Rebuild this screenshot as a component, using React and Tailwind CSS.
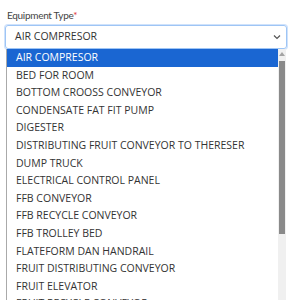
const items = [
  "AIR COMPRESOR",
  "BED FOR ROOM",
  "BOTTOM CROOSS CONVEYOR",
  "CONDENSATE FAT FIT PUMP",
  "DIGESTER",
  "DISTRIBUTING FRUIT CONVEYOR TO THERESER",
  "DUMP TRUCK",
  "ELECTRICAL CONTROL PANEL",
  "FFB CONVEYOR",
  "FFB RECYCLE CONVEYOR",
  "FFB TROLLEY BED",
  "FLATEFORM DAN HANDRAIL",
  "FRUIT DISTRIBUTING CONVEYOR",
  "FRUIT ELEVATOR",
  "FRUIT RECYCLE CONVEYOR",
];

export default function App() {
  return (
    <div
      className="w-[289px] h-[300px] overflow-hidden bg-white text-[#333]"
      style={{ fontFamily: "'Open Sans', 'Noto Sans', sans-serif" }}
    >
      <div
        className="pl-[7px] pt-[8px] text-[10px] leading-[14px] tracking-[-0.3px] text-[#444]"
        style={{ fontFamily: "Lato, sans-serif" }}
      >
        Equipment Type<span className="text-[#d33]">*</span>
      </div>
      <div className="ml-[5px] mr-[2px] mt-[3px] h-[24px] rounded-[3px] border border-[#9ec5f5] shadow-[0_0_0_1px_#cfe2fb] flex items-center justify-between pl-[9px] pr-[5px] text-[10.5px]">
        <span>AIR COMPRESOR</span>
        <svg width="8" height="6" viewBox="0 0 8 6" className="text-[#555]">
          <path d="M1 1.5 L4 4.5 L7 1.5" stroke="currentColor" strokeWidth="1.2" fill="none" />
        </svg>
      </div>
      <div className="ml-[6px] mr-[3px] flex h-[252px] border-l border-[#aaa] bg-white">
        <div className="flex-1 overflow-hidden">
          {items.map((it, i) => (
            <div
              key={it}
              className={
                "h-[17.6px] pl-[9px] text-[10.5px] leading-[17.6px] whitespace-nowrap " +
                (i === 0 ? "bg-[#1a66d2] text-white" : "text-[#333]")
              }
            >
              {it}
            </div>
          ))}
        </div>
        <div className="w-[8px] flex flex-col items-center bg-[#f0f0f0]">
          <div className="h-[10px] flex items-center justify-center">
            <svg width="6" height="4" viewBox="0 0 6 4">
              <path d="M0 4 L3 0 L6 4 Z" fill="#a3a3a3" />
            </svg>
          </div>
          <div className="mt-[2px] h-[173px] w-[6px] bg-[#8a8a8a]" />
        </div>
      </div>
    </div>
  );
}
